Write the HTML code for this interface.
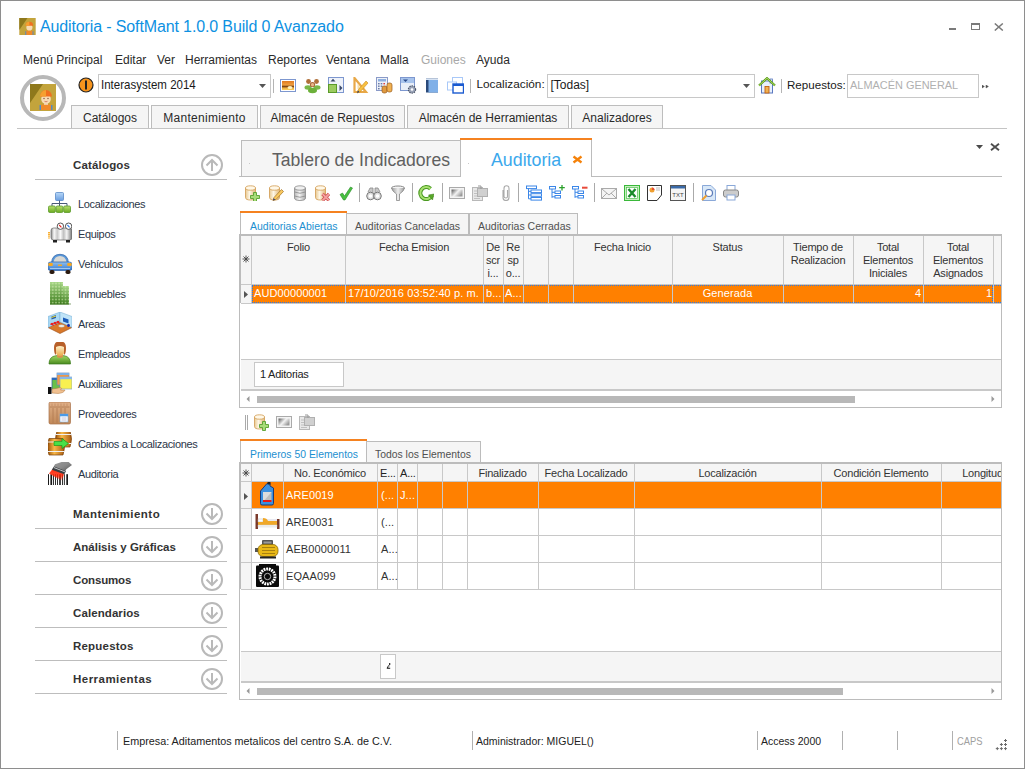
<!DOCTYPE html><html><head><meta charset="utf-8"><style>
*{box-sizing:border-box;margin:0;padding:0}
html,body{width:1025px;height:769px;overflow:hidden;background:#fff}
body{position:relative;font-family:"Liberation Sans",sans-serif;color:#222}
.a{position:absolute}
.t{position:absolute;white-space:nowrap;line-height:1}
.frame{left:0;top:0;width:1025px;height:769px;border:1px solid #8e8e8e}
.menu .t{font-size:12px;color:#2a2a2a}
.rt{position:absolute;top:105px;height:24px;background:#f5f5f5;border:1px solid #bdbdbd;border-bottom:none}
.rt span{position:absolute;top:6px;left:0;width:100%;text-align:center;font-size:12px;color:#2a2a2a;white-space:nowrap;line-height:12px}
.it{position:absolute;left:78px;font-size:11px;color:#2b3648;letter-spacing:-0.35px;white-space:nowrap;line-height:1}
.hd{position:absolute;left:73px;font-size:11.5px;font-weight:bold;color:#333;white-space:nowrap;line-height:1}
.ln{position:absolute;left:35px;width:192px;height:1px;background:#bdbdbd}
.circ{position:absolute;width:22px;height:22px;border-radius:50%;border:2px solid #c6c6c6}
.sep{position:absolute;width:1px;background:#b4b4b4}
.g{position:absolute;font-size:10.5px;color:#222;white-space:nowrap;line-height:1;letter-spacing:-0.2px}
.hl{position:absolute;height:1px;background:#c8c8c8}
.vl{position:absolute;width:1px;background:#c8c8c8}
svg{position:absolute}
</style></head><body>
<div class="a frame"></div>
<svg style="left:19px;top:18px" width="17" height="17" viewBox="0 0 26 27"><rect width="26" height="27" fill="#c3a43c"/><path d="M0 0 H13 L0 19Z" fill="#8e781c"/><path d="M9.5 27 V21.5 Q16 18.5 22.5 21.5 V27Z" fill="#f08a2a"/><rect x="9.5" y="21" width="1.5" height="6" fill="#4a90c8"/><rect x="21" y="21" width="1.5" height="6" fill="#4a90c8"/><ellipse cx="16" cy="15" rx="4.8" ry="5" fill="#f8dcb4"/><path d="M10 12.5 A6 6.5 0 0 1 22 12.5Z" fill="#f07020"/><path d="M10 12.5 A6 6.5 0 0 1 16 6 V12.5Z" fill="#f5a030"/></svg>
<div class="t" style="left:40px;top:18.5px;font-size:16px;color:#0d91e2;letter-spacing:-0.13px">Auditoria - SoftMant 1.0.0 Build 0 Avanzado</div>
<div class="a" style="left:949px;top:28px;width:7px;height:2px;background:#7a7a7a"></div>
<div class="a" style="left:971px;top:23px;width:9px;height:7px;border:1px solid #7a7a7a;border-top-width:2px"></div>
<svg style="left:994px;top:23px" width="10" height="8" viewBox="0 0 10 8"><path d="M0.8 0.5 L8.8 7.5 M8.8 0.5 L0.8 7.5" stroke="#7a7a7a" stroke-width="1.5"/></svg>
<div class="menu">
<div class="t" style="left:23px;top:54px;">Menú Principal</div>
<div class="t" style="left:115px;top:54px;">Editar</div>
<div class="t" style="left:157px;top:54px;">Ver</div>
<div class="t" style="left:185px;top:54px;">Herramientas</div>
<div class="t" style="left:268px;top:54px;">Reportes</div>
<div class="t" style="left:326px;top:54px;">Ventana</div>
<div class="t" style="left:380px;top:54px;">Malla</div>
<div class="t" style="left:421px;top:54px;color:#a8a8a8">Guiones</div>
<div class="t" style="left:476px;top:54px;">Ayuda</div>
</div>
<div class="a" style="left:20px;top:75px;width:46px;height:46px;border-radius:50%;border:4px solid #b8b8b8;background:#fff"></div>
<svg style="left:30px;top:84px" width="26" height="27" viewBox="0 0 26 27"><rect width="26" height="27" fill="#c3a43c"/><path d="M0 0 H13 L0 19Z" fill="#8e781c"/><path d="M9.5 26 V21.5 Q16 18.5 22.5 21.5 V26Z" fill="#f08a2a"/><rect x="9.5" y="21" width="1.5" height="5" fill="#4a90c8"/><rect x="21" y="21" width="1.5" height="5" fill="#4a90c8"/><rect x="14" y="17" width="4" height="4" fill="#f0c8a0"/><ellipse cx="16" cy="15" rx="4.8" ry="5" fill="#f8dcb4"/><path d="M10 12.5 A6 6.5 0 0 1 22 12.5Z" fill="#f07020"/><path d="M10 12.5 A6 6.5 0 0 1 16 6 V12.5Z" fill="#f5a030"/><circle cx="14" cy="14.5" r="0.7" fill="#7a4a3a"/><circle cx="18" cy="14.5" r="0.7" fill="#7a4a3a"/><path d="M14.5 17.3 Q16 18.3 17.5 17.3" stroke="#c86a5a" stroke-width="0.8" fill="none"/></svg>
<svg style="left:78px;top:77px" width="16" height="16" viewBox="0 0 16 16"><circle cx="8" cy="8" r="7" fill="#f7941d" stroke="#222" stroke-width="1.2"/><rect x="7" y="3.5" width="2" height="9" fill="#222"/></svg>
<div class="a" style="left:98px;top:74px;width:173px;height:24px;border:1px solid #c8c8c8;background:#fff"></div>
<div class="t" style="left:101px;top:79px;font-size:12.2px;color:#1a1a1a;transform:scaleX(0.945);transform-origin:0 0">Interasystem 2014</div>
<svg style="left:259px;top:84px" width="8" height="5" viewBox="0 0 8 5"><path d="M0 0H7L3.5 4Z" fill="#555"/></svg>
<div class="sep" style="left:273px;top:79px;height:14px"></div>
<svg style="left:280px;top:77px" width="17" height="17" viewBox="0 0 17 17"><defs><linearGradient id="sun" x1="0" y1="0" x2="0" y2="1"><stop offset="0" stop-color="#e07a20"/><stop offset="0.45" stop-color="#f0a040"/><stop offset="0.6" stop-color="#7a4010"/><stop offset="0.8" stop-color="#f0b040"/><stop offset="1" stop-color="#f8d060"/></linearGradient></defs><rect x="0.5" y="2.5" width="15" height="12" fill="#fff" stroke="#7d97cf"/><rect x="2" y="4" width="12" height="9" fill="url(#sun)"/><ellipse cx="10" cy="10.5" rx="2.5" ry="1.5" fill="#fff4c0"/></svg>
<svg style="left:304px;top:77px" width="17" height="17" viewBox="0 0 17 17"><circle cx="4.5" cy="4.5" r="2.4" fill="#b0703a"/><circle cx="12.5" cy="4.5" r="2.4" fill="#b0703a"/><ellipse cx="4" cy="10.5" rx="3.5" ry="2.2" fill="#7ab848"/><ellipse cx="13" cy="10.5" rx="3.5" ry="2.2" fill="#7ab848"/><circle cx="8.5" cy="7.5" r="2.6" fill="#a8643a"/><ellipse cx="8.5" cy="7.8" rx="1.6" ry="1.8" fill="#e8b888"/><ellipse cx="8.5" cy="13.5" rx="4.5" ry="2.8" fill="#6cb03a"/></svg>
<svg style="left:328px;top:77px" width="17" height="17" viewBox="0 0 17 17"><rect x="0.5" y="0.5" width="15" height="15" fill="#eef2fa" stroke="#7d97cf"/><rect x="0.5" y="7.5" width="8" height="8" fill="#9ccc60" stroke="#5a9a2a"/><path d="M2.5 4.5 L5 1.8 L7.5 4.5Z" fill="#3a4a6a"/><path d="M11.5 8 L14.5 11 L11.5 14Z" fill="#3a4a6a"/></svg>
<svg style="left:353px;top:77px" width="17" height="17" viewBox="0 0 17 17"><path d="M1.5 1 L1.5 15 L13 15Z" fill="none" stroke="#e8a848" stroke-width="2.2"/><path d="M4.5 6.5 L4.5 12 L8.5 12Z" fill="#f8e0a8"/><path d="M15 6 L13 4 L5 13 L4 16 L7 15Z" fill="#f8c040" stroke="#c88a20" stroke-width="0.6"/><path d="M4 16 L5 13.5 L6.5 15Z" fill="#2a3a6a"/></svg>
<svg style="left:376px;top:77px" width="17" height="17" viewBox="0 0 17 17"><rect x="0.5" y="0.5" width="11" height="13" fill="#eef2f8" stroke="#8a9ac8"/><rect x="2" y="2" width="8" height="2.5" fill="#8fb0e0"/><g fill="#6a7aa8"><rect x="2" y="6" width="1.6" height="1.4"/><rect x="4.7" y="6" width="1.6" height="1.4"/><rect x="7.4" y="6" width="1.6" height="1.4" fill="#e04040"/><rect x="2" y="8.5" width="1.6" height="1.4"/><rect x="4.7" y="8.5" width="1.6" height="1.4"/><rect x="2" y="11" width="1.6" height="1.4"/></g><rect x="6" y="9" width="5" height="7" rx="2" fill="#e09a40" stroke="#9a5a1a" stroke-width="0.7"/><rect x="11" y="6" width="5" height="9" rx="2" fill="#f0b050" stroke="#9a5a1a" stroke-width="0.7"/></svg>
<svg style="left:400px;top:77px" width="17" height="17" viewBox="0 0 17 17"><rect x="0.5" y="0.5" width="14" height="13" fill="#e8eef8" stroke="#7d97cf"/><rect x="1" y="1" width="13" height="5" fill="#a8c4ec"/><path d="M3 2.5 H8 L5.5 5Z" fill="#2a4a8a"/><circle cx="12" cy="12.5" r="3.6" fill="#9aa4b8" stroke="#4a5468" stroke-width="1.2" stroke-dasharray="1.4 0.9"/><circle cx="12" cy="12.5" r="1.3" fill="#fff"/></svg>
<svg style="left:425px;top:77px" width="17" height="17" viewBox="0 0 17 17"><rect x="1" y="1.5" width="12" height="14" fill="#2a4a7a"/><rect x="3.5" y="2.5" width="9.5" height="13" fill="#80b0e8"/><rect x="1" y="1.5" width="12" height="1.5" fill="#d8e4f4"/></svg>
<svg style="left:447px;top:77px" width="17" height="17" viewBox="0 0 17 17"><rect x="5.5" y="0.5" width="10" height="8" fill="#fff" stroke="#a8c8f8"/><rect x="0.5" y="5" width="9" height="8" fill="#fff" stroke="#a8c8f8"/><rect x="6" y="7" width="10.5" height="9" fill="#fff" stroke="#1a5ad0" stroke-width="1.4"/><rect x="6" y="7" width="10.5" height="2" fill="#1a5ad0"/></svg>
<div class="sep" style="left:470px;top:79px;height:14px"></div>
<div class="t" style="left:476.5px;top:79px;font-size:11.8px;color:#1a1a1a">Localización:</div>
<div class="a" style="left:547px;top:74px;width:208px;height:24px;border:1px solid #c8c8c8;background:#fff"></div>
<div class="t" style="left:550.5px;top:79px;font-size:12px;color:#1a1a1a">[Todas]</div>
<svg style="left:743px;top:84px" width="8" height="5" viewBox="0 0 8 5"><path d="M0 0H7L3.5 4Z" fill="#555"/></svg>
<svg style="left:758px;top:77px" width="18" height="17" viewBox="0 0 18 17"><rect x="3.5" y="4" width="11" height="12" fill="#e8f0fc" stroke="#5a78c0" stroke-width="1"/><rect x="12" y="2" width="2.5" height="4" fill="#e8f0fc" stroke="#5a78c0" stroke-width="0.8"/><path d="M1 8.5 L9 1.2 L17 8.5" fill="none" stroke="#5a9a18" stroke-width="2.2"/><path d="M1 8.5 L9 1.2 L17 8.5" fill="none" stroke="#a8d860" stroke-width="1"/><rect x="7" y="9.5" width="4" height="6.5" fill="#f0b050" stroke="#c06010" stroke-width="0.9"/></svg>
<div class="sep" style="left:781px;top:79px;height:14px"></div>
<div class="t" style="left:787px;top:79px;font-size:11.6px;color:#1a1a1a">Repuestos:</div>
<div class="a" style="left:847px;top:74px;width:132px;height:24px;border:1px solid #c8c8c8;background:#fff"></div>
<div class="t" style="left:850px;top:79.5px;font-size:10.95px;color:#b0b0b0">ALMACÉN GENERAL</div>
<svg style="left:982px;top:85px" width="8" height="4" viewBox="0 0 8 4"><path d="M0 0 L2.4 1.5 L0 3Z M4 0 L6.4 1.5 L4 3Z" fill="#505050" stroke="#505050" stroke-width="0.5"/></svg>
<div class="rt" style="left:71px;width:78px"><span>Catálogos</span></div>
<div class="rt" style="left:151px;width:107px"><span><span style='letter-spacing:0.3px;position:static'>Mantenimiento</span></span></div>
<div class="rt" style="left:260px;width:145px"><span>Almacén de Repuestos</span></div>
<div class="rt" style="left:407px;width:162px"><span>Almacén de Herramientas</span></div>
<div class="rt" style="left:571px;width:92px"><span>Analizadores</span></div>
<div class="a" style="left:17px;top:128px;width:990px;height:1px;background:#c4c4c4"></div>
<div class="hd" style="top:160px;letter-spacing:0.17px">Catálogos</div>
<svg style="left:201px;top:154px" width="23" height="23" viewBox="0 0 23 23"><circle cx="11" cy="11" r="10" fill="none" stroke="#b9b9b9" stroke-width="2"/><path d="M11 17 V5.5 M5.5 11.5 L11 6 L16.5 11.5" fill="none" stroke="#b9b9b9" stroke-width="2"/></svg>
<div class="ln" style="top:179px"></div>
<svg style="left:48px;top:192px" width="24" height="24" viewBox="0 0 24 24"><defs><linearGradient id="nb" x1="0" y1="0" x2="0" y2="1"><stop offset="0" stop-color="#b8d8f8"/><stop offset="1" stop-color="#6a9ee0"/></linearGradient><linearGradient id="ng" x1="0" y1="0" x2="0" y2="1"><stop offset="0" stop-color="#b8e070"/><stop offset="1" stop-color="#6aaa20"/></linearGradient></defs><rect x="7.5" y="0.5" width="8" height="8" rx="1" fill="url(#nb)" stroke="#5a8ac8" stroke-width="0.8"/><path d="M11.5 8.5 V11.5 M4 11.5 H19 M4 11.5 V14 M11.5 11.5 V14 M19 11.5 V14" stroke="#4a5a78" stroke-width="1"/><rect x="0.5" y="14" width="6.8" height="6.5" rx="1.2" fill="url(#ng)" stroke="#5a9a2a" stroke-width="0.8"/><rect x="8.1" y="14" width="6.8" height="6.5" rx="1.2" fill="url(#ng)" stroke="#5a9a2a" stroke-width="0.8"/><rect x="15.7" y="14" width="6.8" height="6.5" rx="1.2" fill="url(#ng)" stroke="#5a9a2a" stroke-width="0.8"/></svg>
<div class="it" style="top:199px">Localizaciones</div>
<svg style="left:48px;top:222px" width="24" height="24" viewBox="0 0 24 24"><defs><linearGradient id="tk" x1="0" y1="0" x2="1" y2="0"><stop offset="0" stop-color="#8a8a8a"/><stop offset="0.15" stop-color="#f8f8f8"/><stop offset="0.3" stop-color="#c8c8c8"/><stop offset="0.45" stop-color="#fafafa"/><stop offset="0.6" stop-color="#c0c0c0"/><stop offset="0.75" stop-color="#f4f4f4"/><stop offset="1" stop-color="#777"/></linearGradient></defs><rect x="3" y="6" width="21" height="12" rx="2.5" fill="url(#tk)" stroke="#666" stroke-width="0.7"/><rect x="5" y="18" width="4" height="2.5" fill="#222"/><rect x="18" y="18" width="4" height="2.5" fill="#222"/><circle cx="12.4" cy="4.2" r="3.2" fill="#fff" stroke="#444" stroke-width="0.9"/><circle cx="20.6" cy="4.2" r="3.2" fill="#fff" stroke="#444" stroke-width="0.9"/><path d="M11.2 3 L13.4 5.3" stroke="#e82020" stroke-width="1.1"/><path d="M19.4 3 L21.6 5.3" stroke="#2a7ae8" stroke-width="1.1"/><path d="M1 10 V17" stroke="#f8a820" stroke-width="1.8" stroke-dasharray="1.2 0.6"/></svg>
<div class="it" style="top:229px">Equipos</div>
<svg style="left:48px;top:252px" width="24" height="24" viewBox="0 0 24 24"><defs><linearGradient id="cb" x1="0" y1="0" x2="0" y2="1"><stop offset="0" stop-color="#8ec0f0"/><stop offset="1" stop-color="#3a78c8"/></linearGradient></defs><path d="M3.5 11 Q4 2.3 12 2.3 Q20 2.3 20.5 11Z" fill="#5a98d8" stroke="#2a60a8" stroke-width="0.7"/><path d="M5.5 10 Q6.5 4 12 4 Q17.5 4 18.5 10Z" fill="#d8d8d4"/><rect x="0" y="10" width="24" height="8.5" rx="2.5" fill="url(#cb)" stroke="#2a60a8" stroke-width="0.7"/><rect x="0.3" y="11" width="4.5" height="3" rx="1" fill="#f8a820"/><rect x="19.2" y="11" width="4.5" height="3" rx="1" fill="#f8a820"/><rect x="10" y="12.5" width="4" height="1.5" fill="#f8a820"/><path d="M2 16.5 H22" stroke="#b8d8f8" stroke-width="0.8"/><rect x="1.5" y="18" width="5" height="4" rx="1.8" fill="#2a1a10"/><rect x="17.5" y="18" width="5" height="4" rx="1.8" fill="#2a1a10"/></svg>
<div class="it" style="top:259px">Vehículos</div>
<svg style="left:48px;top:282px" width="24" height="24" viewBox="0 0 24 24"><defs><linearGradient id="bg1" x1="0" y1="0" x2="0" y2="1"><stop offset="0" stop-color="#a8d888"/><stop offset="1" stop-color="#3a7a1a"/></linearGradient><pattern id="bw" width="3.2" height="3.2" patternUnits="userSpaceOnUse"><rect x="0.6" y="0.6" width="1.8" height="1.8" fill="#d8f0b8" opacity="0.55"/></pattern></defs><rect x="2" y="-1" width="13" height="23.5" fill="url(#bg1)"/><rect x="2" y="-1" width="13" height="23.5" fill="url(#bw)"/><rect x="15" y="4" width="6" height="18.5" fill="url(#bg1)"/><rect x="15" y="4" width="6" height="18.5" fill="url(#bw)"/><rect x="2" y="21.5" width="21" height="1" fill="#3a6a1a" opacity="0.6"/></svg>
<div class="it" style="top:289px">Inmuebles</div>
<svg style="left:48px;top:312px" width="24" height="24" viewBox="0 0 24 24"><path d="M0 15.5 L12 10 L24 15.5 L12 21.5Z" fill="#d8782a" stroke="#9a4a10" stroke-width="0.6"/><path d="M0 15.5 V4.5 L12 0 V10Z" fill="#a8d8f4" stroke="#70a8d0" stroke-width="0.5"/><path d="M12 0 L24 4.5 V15.5 L12 10Z" fill="#c0e4f8" stroke="#70a8d0" stroke-width="0.5"/><path d="M3.5 4.5 L8 3 V6 L3.5 7.5Z" fill="#2a5aa8"/><path d="M3.5 5 L8 3.6 V4.6 L3.5 6Z" fill="#f0e030"/><path d="M15 5.5 L20.5 7.5 V11.5 L15 9.5Z" fill="#1a5ab8"/><path d="M2 12.5 Q3 10 5 11 L6 14 Z M5 11.5 Q6 9 8 10 L9 13Z M8 10.5 Q9 8 11 9 L12 12Z" fill="#e82020"/><ellipse cx="13.5" cy="14" rx="3" ry="1.3" fill="#f0f0e8" stroke="#aaa" stroke-width="0.4"/><circle cx="20.5" cy="13.5" r="1.4" fill="#1a2aa8"/></svg>
<div class="it" style="top:319px">Areas</div>
<svg style="left:48px;top:342px" width="24" height="24" viewBox="0 0 24 24"><defs><linearGradient id="es" x1="0" y1="0" x2="0" y2="1"><stop offset="0" stop-color="#a0d860"/><stop offset="1" stop-color="#4a8a20"/></linearGradient><linearGradient id="ef" x1="0" y1="0" x2="0" y2="1"><stop offset="0" stop-color="#fff0c8"/><stop offset="1" stop-color="#e8a848"/></linearGradient></defs><path d="M1 22 Q1 14.5 8 13.7 L16 13.7 Q22.5 14.5 22.5 22Z" fill="url(#es)" stroke="#3a7a1a" stroke-width="0.7"/><path d="M9 12 H15 V15 Q12 17 9 15Z" fill="#d89050"/><path d="M6 6 Q6 -1 12 -0.5 Q18 -1 18 6 Q18 11 16.5 13 L15 9 H9 L7.5 13 Q6 11 6 6Z" fill="#b8602a"/><path d="M8 5 Q12 3 16 5 V10 Q16 14 12 14 Q8 14 8 10Z" fill="url(#ef)"/></svg>
<div class="it" style="top:349px">Empleados</div>
<svg style="left:48px;top:372px" width="24" height="24" viewBox="0 0 24 24"><rect x="4" y="6" width="8" height="12" fill="#6ac048" stroke="#2a5aa8" stroke-width="0.7"/><rect x="4" y="6" width="8" height="2" fill="#2a6ab8"/><rect x="9" y="1" width="12" height="12" fill="#f09848" stroke="#6a8ab8" stroke-width="0.7"/><rect x="9" y="1" width="12" height="2" fill="#7ab0e8"/><rect x="12" y="5" width="12" height="12" fill="#f8f050" stroke="#8aa8c8" stroke-width="0.7"/><rect x="12" y="5" width="12" height="2.2" fill="#88b8e8"/><path d="M4 17 Q9 16.5 12 15.5 Q15 16 12.5 18 L17 18 Q16 21 10 21.5 L4 21Z" fill="#f0c090" stroke="#b07840" stroke-width="0.5"/><rect x="0" y="15" width="3.5" height="7" fill="#111"/></svg>
<div class="it" style="top:379px">Auxiliares</div>
<svg style="left:48px;top:402px" width="24" height="24" viewBox="0 0 24 24"><defs><linearGradient id="cr" x1="0" y1="0" x2="0" y2="1"><stop offset="0" stop-color="#e0b088"/><stop offset="1" stop-color="#c08858"/></linearGradient></defs><rect x="1" y="0" width="21.5" height="22" rx="1.5" fill="url(#cr)" stroke="#a87048" stroke-width="0.7"/><path d="M2 5 H21.5" stroke="#a87048" stroke-width="0.7"/><path d="M4 1.5 V4 M7 1.5 V4 M10 1.5 V4 M13 1.5 V4 M16 1.5 V4 M19 1.5 V4" stroke="#b88058" stroke-width="0.6"/><path d="M5 6 V21 M9 6 V21 M13 6 V21 M17 6 V21" stroke="#b07850" stroke-width="0.8"/><rect x="12" y="12" width="8" height="8" fill="#fff" stroke="#7aa8d8" stroke-width="0.6"/><rect x="12" y="12" width="8" height="2.3" fill="#4a9ae8"/><path d="M13.5 16 H18.5 M13.5 18 H18.5" stroke="#aac" stroke-width="0.7"/></svg>
<div class="it" style="top:409px">Proveedores</div>
<svg style="left:48px;top:432px" width="24" height="24" viewBox="0 0 24 24"><defs><linearGradient id="br" x1="0" y1="0" x2="1" y2="0"><stop offset="0" stop-color="#9a5008"/><stop offset="0.4" stop-color="#f8b848"/><stop offset="1" stop-color="#a85a10"/></linearGradient></defs><path d="M9 -1 H22 Q25 7 22 15 H9 Q6 7 9 -1Z" fill="url(#br)" stroke="#7a4008" stroke-width="0.7"/><path d="M7.5 2.5 H23.5 M7.5 11.5 H23.5" stroke="#f0f0f0" stroke-width="1.2"/><path d="M1 6.5 H15 Q18 15 15 23 H1 Q-2 15 1 6.5Z" fill="url(#br)" stroke="#7a4008" stroke-width="0.7"/><path d="M-0.5 10 H16.5 M-0.5 19.5 H16.5" stroke="#f0f0f0" stroke-width="1.2"/><path d="M6 9.5 H14 V6.5 L20.5 11.5 L14 16.5 V13.5 H6Z" fill="#48e048" stroke="#1a9a1a" stroke-width="0.7"/></svg>
<div class="it" style="top:439px">Cambios a Localizaciones</div>
<svg style="left:48px;top:462px" width="24" height="24" viewBox="0 0 24 24"><defs><linearGradient id="sc" x1="0" y1="0" x2="1" y2="1"><stop offset="0" stop-color="#9a9a9a"/><stop offset="0.5" stop-color="#8a8a8a"/><stop offset="1" stop-color="#505050"/></linearGradient><linearGradient id="lz" x1="0" y1="0" x2="0" y2="1"><stop offset="0" stop-color="#ff3010"/><stop offset="0.6" stop-color="#ff2000" stop-opacity="0.8"/><stop offset="1" stop-color="#ff2000" stop-opacity="0"/></linearGradient></defs><g fill="#1a1a1a"><rect x="0" y="12.2" width="1" height="10.8"/><rect x="2.4" y="12.2" width="1.7" height="10.8"/><rect x="5" y="12.2" width="0.9" height="10.8"/><rect x="7" y="12.2" width="0.9" height="10.8"/><rect x="9.1" y="12.2" width="0.9" height="10.8"/><rect x="11.2" y="12.2" width="1.6" height="10.8"/><rect x="14" y="12.2" width="0.9" height="10.8"/><rect x="15.9" y="12.2" width="0.9" height="10.8"/><rect x="18.3" y="12.2" width="1.7" height="10.8"/></g><path d="M1 11.5 L4.5 7 L16 11.5 L14 19Z" fill="url(#lz)"/><path d="M7 2.3 L14.4 -0.3 L19.9 -0.7 L24 3 L18.3 7.3 L16.4 10.8 L4.25 7.3Z" fill="url(#sc)"/><path d="M3.8 7.8 L6.3 4.6 L18 9.2 L16.3 12.3Z" fill="#3a3e42"/><path d="M6 5.6 L17.3 10" stroke="#e8e8e8" stroke-width="0.8"/></svg>
<div class="it" style="top:469px">Auditoria</div>
<div class="hd" style="top:509px;letter-spacing:0.46px">Mantenimiento</div>
<svg style="left:201px;top:503px" width="23" height="23" viewBox="0 0 23 23"><circle cx="11" cy="11" r="10" fill="none" stroke="#b9b9b9" stroke-width="2"/><path d="M11 5 V16.5 M5.5 10.5 L11 16 L16.5 10.5" fill="none" stroke="#b9b9b9" stroke-width="2"/></svg>
<div class="ln" style="top:528px"></div>
<div class="hd" style="top:542px;letter-spacing:0px">Análisis y Gráficas</div>
<svg style="left:201px;top:536px" width="23" height="23" viewBox="0 0 23 23"><circle cx="11" cy="11" r="10" fill="none" stroke="#b9b9b9" stroke-width="2"/><path d="M11 5 V16.5 M5.5 10.5 L11 16 L16.5 10.5" fill="none" stroke="#b9b9b9" stroke-width="2"/></svg>
<div class="ln" style="top:561px"></div>
<div class="hd" style="top:575px;letter-spacing:-0.15px">Consumos</div>
<svg style="left:201px;top:569px" width="23" height="23" viewBox="0 0 23 23"><circle cx="11" cy="11" r="10" fill="none" stroke="#b9b9b9" stroke-width="2"/><path d="M11 5 V16.5 M5.5 10.5 L11 16 L16.5 10.5" fill="none" stroke="#b9b9b9" stroke-width="2"/></svg>
<div class="ln" style="top:594px"></div>
<div class="hd" style="top:608px;letter-spacing:0.09px">Calendarios</div>
<svg style="left:201px;top:602px" width="23" height="23" viewBox="0 0 23 23"><circle cx="11" cy="11" r="10" fill="none" stroke="#b9b9b9" stroke-width="2"/><path d="M11 5 V16.5 M5.5 10.5 L11 16 L16.5 10.5" fill="none" stroke="#b9b9b9" stroke-width="2"/></svg>
<div class="ln" style="top:627px"></div>
<div class="hd" style="top:641px;letter-spacing:0.2px">Repuestos</div>
<svg style="left:201px;top:635px" width="23" height="23" viewBox="0 0 23 23"><circle cx="11" cy="11" r="10" fill="none" stroke="#b9b9b9" stroke-width="2"/><path d="M11 5 V16.5 M5.5 10.5 L11 16 L16.5 10.5" fill="none" stroke="#b9b9b9" stroke-width="2"/></svg>
<div class="ln" style="top:660px"></div>
<div class="hd" style="top:674px;letter-spacing:0.47px">Herramientas</div>
<svg style="left:201px;top:668px" width="23" height="23" viewBox="0 0 23 23"><circle cx="11" cy="11" r="10" fill="none" stroke="#b9b9b9" stroke-width="2"/><path d="M11 5 V16.5 M5.5 10.5 L11 16 L16.5 10.5" fill="none" stroke="#b9b9b9" stroke-width="2"/></svg>
<div class="ln" style="top:693px"></div>
<svg style="left:976px;top:145px" width="8" height="5" viewBox="0 0 8 5"><path d="M0 0H7L3.5 4Z" fill="#4a4a4a"/></svg>
<svg style="left:990px;top:142.5px" width="10" height="8" viewBox="0 0 10 8"><path d="M1 0.8 L9 7.2 M9 0.8 L1 7.2" stroke="#4e4e4e" stroke-width="1.9"/></svg>
<div class="a" style="left:241px;top:140px;width:220px;height:37px;background:#f5f5f5;border:1px solid #bcbcbc"></div>
<div class="a" style="left:249px;top:163px;width:1px;height:1px;background:#c8c8c8"></div>
<div class="t" style="left:272px;top:152px;font-size:17.6px;color:#606060">Tablero de Indicadores</div>
<div class="a" style="left:461px;top:140px;width:131px;height:37px;background:#fff;border-right:1px solid #bcbcbc"></div>
<div class="a" style="left:460px;top:138px;width:132px;height:2px;background:#f58220"></div>
<div class="a" style="left:468px;top:163px;width:1px;height:1px;background:#c8c8c8"></div>
<div class="t" style="left:491px;top:152px;font-size:17.8px;color:#3aa8ec">Auditoria</div>
<svg style="left:572px;top:154.5px" width="11" height="9" viewBox="0 0 11 9"><path d="M1.5 1.5 L9.5 7.5 M9.5 1.5 L1.5 7.5" stroke="#f5820a" stroke-width="2.3"/></svg>
<div class="hl" style="left:239px;top:176px;width:3px;background:#bcbcbc"></div>
<div class="hl" style="left:592px;top:176px;width:410px;background:#bcbcbc"></div>
<svg style="left:244px;top:185px" width="16" height="16" viewBox="0 0 16 16"><defs><linearGradient id="cg1" x1="0" y1="0" x2="1" y2="0"><stop offset="0" stop-color="#e8c890"/><stop offset="0.4" stop-color="#fdf6e6"/><stop offset="1" stop-color="#e0b878"/></linearGradient></defs><path d="M1.5 3 V12.5 Q1.5 15 6.5 15 Q11.5 15 11.5 12.5 V3" fill="url(#cg1)" stroke="#d09a50" stroke-width="0.8"/><ellipse cx="6.5" cy="3" rx="5" ry="2.2" fill="#fff8e8" stroke="#d09a50" stroke-width="0.8"/><path d="M9.5 7.5 H12.5 V10.5 H15.5 V13.5 H12.5 V16.5 H9.5 V13.5 H6.5 V10.5 H9.5Z" fill="#a8dc78" stroke="#58a030" stroke-width="0.9"/></svg>
<svg style="left:268px;top:185px" width="16" height="16" viewBox="0 0 16 16"><defs><linearGradient id="cg2" x1="0" y1="0" x2="1" y2="0"><stop offset="0" stop-color="#e8c890"/><stop offset="0.4" stop-color="#fdf6e6"/><stop offset="1" stop-color="#e0b878"/></linearGradient></defs><path d="M1.5 3 V12.5 Q1.5 15 6.5 15 Q11.5 15 11.5 12.5 V3" fill="url(#cg2)" stroke="#d09a50" stroke-width="0.8"/><ellipse cx="6.5" cy="3" rx="5" ry="2.2" fill="#fff8e8" stroke="#d09a50" stroke-width="0.8"/><path d="M15.5 6.5 L13.5 4.5 L6 12.5 L5 15.5 L8 14.5Z" fill="#f8c860" stroke="#a07020" stroke-width="0.7"/><path d="M5 15.5 L5.6 13.3 L7.3 14.8Z" fill="#2a3a7a"/></svg>
<svg style="left:292px;top:185px" width="16" height="16" viewBox="0 0 16 16"><defs><linearGradient id="cg3" x1="0" y1="0" x2="1" y2="0"><stop offset="0" stop-color="#b8b8b8"/><stop offset="0.45" stop-color="#f4f4f4"/><stop offset="1" stop-color="#a8a8a8"/></linearGradient></defs><path d="M2.5 3 V13 Q2.5 15.5 8 15.5 Q13.5 15.5 13.5 13 V3" fill="url(#cg3)" stroke="#8a8a8a" stroke-width="0.8"/><ellipse cx="8" cy="3" rx="5.5" ry="2.2" fill="#f0f0f0" stroke="#8a8a8a" stroke-width="0.8"/><path d="M2.5 7 Q8 9.5 13.5 7 M2.5 11 Q8 13.5 13.5 11" fill="none" stroke="#8a8a8a" stroke-width="0.8"/></svg>
<svg style="left:314px;top:185px" width="16" height="16" viewBox="0 0 16 16"><defs><linearGradient id="cg4" x1="0" y1="0" x2="1" y2="0"><stop offset="0" stop-color="#e8c890"/><stop offset="0.4" stop-color="#fdf6e6"/><stop offset="1" stop-color="#e0b878"/></linearGradient></defs><path d="M1.5 3 V12.5 Q1.5 15 6.5 15 Q11.5 15 11.5 12.5 V3" fill="url(#cg4)" stroke="#d09a50" stroke-width="0.8"/><ellipse cx="6.5" cy="3" rx="5" ry="2.2" fill="#fff8e8" stroke="#d09a50" stroke-width="0.8"/><path d="M8.5 9 L15 15.5 M15 9 L8.5 15.5" stroke="#c84848" stroke-width="3.2"/><path d="M8.5 9 L15 15.5 M15 9 L8.5 15.5" stroke="#f4a0a0" stroke-width="1.8"/></svg>
<svg style="left:338px;top:185px" width="16" height="16" viewBox="0 0 16 16"><path d="M2 9.5 L4.5 8 L6.5 11 L12.5 2 L14.5 3 L7 15 L5.5 15Z" fill="#48c040" stroke="#2a8a2a" stroke-width="0.6"/></svg>
<svg style="left:366px;top:185px" width="16" height="16" viewBox="0 0 16 16"><path d="M2 7 L4 3 H7 V8 M14 7 L12 3 H9 V8" fill="#c8c8c8" stroke="#888" stroke-width="0.8"/><circle cx="4.5" cy="11" r="3.8" fill="#ddd" stroke="#777" stroke-width="1"/><circle cx="11.5" cy="11" r="3.8" fill="#ddd" stroke="#777" stroke-width="1"/><circle cx="4.5" cy="11" r="1.8" fill="#fff"/><circle cx="11.5" cy="11" r="1.8" fill="#fff"/></svg>
<svg style="left:390px;top:185px" width="16" height="16" viewBox="0 0 16 16"><defs><linearGradient id="fg" x1="0" y1="0" x2="1" y2="0"><stop offset="0" stop-color="#999"/><stop offset="0.5" stop-color="#eee"/><stop offset="1" stop-color="#999"/></linearGradient></defs><ellipse cx="8" cy="3" rx="6.5" ry="2" fill="#f4f4f4" stroke="#888"/><path d="M1.5 3 Q2 6 6.5 9 V15.5 H9.5 V9 Q14 6 14.5 3" fill="url(#fg)" stroke="#888" stroke-width="0.8"/></svg>
<svg style="left:418px;top:185px" width="16" height="16" viewBox="0 0 16 16"><path d="M13.8 10.5 A6 6 0 1 1 12.5 3.8" fill="none" stroke="#4a9a20" stroke-width="4"/><path d="M13.8 10.5 A6 6 0 1 1 12.5 3.8" fill="none" stroke="#a8e070" stroke-width="2"/><path d="M10.5 10 L16 9 L14.5 15Z" fill="#58a828" stroke="#3a7a18" stroke-width="0.5"/></svg>
<svg style="left:449px;top:185px" width="16" height="16" viewBox="0 0 16 16"><defs><linearGradient id="wg1" x1="0" y1="0" x2="1" y2="0.6"><stop offset="0" stop-color="#555"/><stop offset="0.55" stop-color="#f4f4f4"/><stop offset="1" stop-color="#999"/></linearGradient></defs><rect x="0.5" y="2.5" width="15" height="11" fill="#f4f4f4" stroke="#aaa"/><rect x="2.5" y="4.5" width="11" height="7" fill="url(#wg1)"/></svg>
<svg style="left:472px;top:185px" width="16" height="16" viewBox="0 0 16 16"><rect x="0.5" y="2.5" width="10" height="13" fill="#e8e8e8" stroke="#b8b8b8"/><path d="M2 6 H8 M2 8.5 H8 M2 11 H8 M2 13.5 H8" stroke="#c0c0c0"/><rect x="5.5" y="3.5" width="10" height="8" fill="#d0d0d0" stroke="#b0b0b0"/><path d="M6 1 L9 1 L9 4" stroke="#999" fill="none"/></svg>
<svg style="left:498px;top:185px" width="16" height="16" viewBox="0 0 16 16"><path d="M5 5 V12.5 Q5 15.5 8 15.5 Q11 15.5 11 12.5 V3.5 Q11 0.8 8.5 0.8 Q6 0.8 6 3.5 V11.5 Q6 13 8 13 Q9.5 13 9.5 11.5 V5" fill="none" stroke="#aaa" stroke-width="1.1"/></svg>
<svg style="left:526px;top:185px" width="16" height="16" viewBox="0 0 16 16"><rect x="0.5" y="1" width="10" height="2.6" fill="#fff" stroke="#3a86e8" stroke-width="1"/><path d="M2.5 3.6 V13.8 M2.5 6.3 H5 M2.5 10 H5 M2.5 13.8 H5" stroke="#3a86e8" stroke-width="1"/><rect x="5" y="5" width="10.5" height="2.6" fill="#fff" stroke="#3a86e8" stroke-width="1"/><rect x="5" y="8.7" width="10.5" height="2.6" fill="#fff" stroke="#3a86e8" stroke-width="1"/><rect x="5" y="12.5" width="10.5" height="2.6" fill="#fff" stroke="#3a86e8" stroke-width="1"/></svg>
<svg style="left:549px;top:185px" width="16" height="16" viewBox="0 0 16 16"><rect x="0.5" y="1.5" width="6" height="2.5" fill="#fff" stroke="#3a86e8" stroke-width="1"/><path d="M3 4 V12.8 M3 7.3 H6 M3 11.8 H6" stroke="#3a86e8" stroke-width="1"/><rect x="6" y="6" width="5.5" height="2.5" fill="#fff" stroke="#3a86e8" stroke-width="1"/><rect x="6" y="10.5" width="5.5" height="2.5" fill="#fff" stroke="#3a86e8" stroke-width="1"/><path d="M13 0 V5.5 M10.2 2.7 H15.8" stroke="#2aa02a" stroke-width="1.3"/></svg>
<svg style="left:572px;top:185px" width="16" height="16" viewBox="0 0 16 16"><rect x="0.5" y="1.5" width="6" height="2.5" fill="#fff" stroke="#3a86e8" stroke-width="1"/><path d="M3 4 V12.8 M3 7.3 H6 M3 11.8 H6" stroke="#3a86e8" stroke-width="1"/><rect x="6" y="6" width="5.5" height="2.5" fill="#fff" stroke="#3a86e8" stroke-width="1"/><rect x="6" y="10.5" width="5.5" height="2.5" fill="#fff" stroke="#3a86e8" stroke-width="1"/><rect x="10" y="1.7" width="5.5" height="2" fill="#e84a3a"/></svg>
<svg style="left:601px;top:185px" width="16" height="16" viewBox="0 0 16 16"><rect x="0.5" y="3.5" width="15" height="10" fill="#f4f4f4" stroke="#aaa"/><path d="M1 4 L8 10 L15 4 M1 13 L6 8 M15 13 L10 8" fill="none" stroke="#aaa"/></svg>
<svg style="left:624px;top:185px" width="16" height="16" viewBox="0 0 16 16"><rect x="0.5" y="0.5" width="15" height="15" fill="#c8f0c0" stroke="#3ab83a"/><rect x="2.5" y="2.5" width="11" height="11" fill="#fff" stroke="#3ab83a" stroke-width="0.6"/><path d="M4.5 4 L11.5 12 M11.5 4 L4.5 12" stroke="#1a8a2a" stroke-width="2.4"/></svg>
<svg style="left:647px;top:185px" width="16" height="16" viewBox="0 0 16 16"><path d="M0.5 0.5 H14.5 V10 L10 15.5 H0.5Z" fill="#fff" stroke="#333"/><circle cx="5" cy="5" r="2.5" fill="#f0a030"/><path d="M5 5 V2.5 A2.5 2.5 0 0 1 7.5 5Z" fill="#e84a3a"/><path d="M9 3 H13 M9 5 H13" stroke="#bbb"/></svg>
<svg style="left:670px;top:185px" width="16" height="16" viewBox="0 0 16 16"><rect x="0.5" y="0.5" width="15" height="15" fill="#f4f4f4" stroke="#555"/><rect x="1" y="1" width="14" height="2.5" fill="#3a6aa8"/><text x="8" y="12" font-size="6" font-family="Liberation Sans" text-anchor="middle" fill="#444">TXT</text></svg>
<svg style="left:701px;top:185px" width="16" height="16" viewBox="0 0 16 16"><path d="M1.5 0.5 H10 L14.5 5 V15.5 H1.5Z" fill="#d8e8f8" stroke="#8aa8d8"/><circle cx="8" cy="8" r="3.5" fill="#fff" stroke="#5a7ab8" stroke-width="1.2"/><path d="M5.5 10.5 L1 15" stroke="#f0a030" stroke-width="2"/></svg>
<svg style="left:723px;top:185px" width="16" height="16" viewBox="0 0 16 16"><rect x="4" y="0.5" width="8" height="5" fill="#fff" stroke="#8aa8d8"/><rect x="0.5" y="5" width="15" height="7" rx="2" fill="#ccc" stroke="#888"/><rect x="4" y="10" width="8" height="5" fill="#fff" stroke="#8aa8d8"/></svg>
<div class="sep" style="left:359px;top:183px;height:19px;background:#aaa"></div>
<div class="sep" style="left:412px;top:183px;height:19px;background:#aaa"></div>
<div class="sep" style="left:442px;top:183px;height:19px;background:#aaa"></div>
<div class="sep" style="left:518px;top:183px;height:19px;background:#aaa"></div>
<div class="sep" style="left:594px;top:183px;height:19px;background:#aaa"></div>
<div class="sep" style="left:693px;top:183px;height:19px;background:#aaa"></div>
<div class="a" style="left:346px;top:213px;width:123px;height:22px;background:#f5f5f5;border:1px solid #bcbcbc;border-bottom:none"></div>
<div class="a" style="left:469px;top:213px;width:109px;height:22px;background:#f5f5f5;border:1px solid #bcbcbc;border-bottom:none"></div>
<div class="a" style="left:240px;top:211px;width:106px;height:24px;background:#fff;border-left:1px solid #bcbcbc"></div>
<div class="a" style="left:240px;top:211px;width:107px;height:2px;background:#f58220"></div>
<div class="t" style="left:250px;top:221px;font-size:10.5px;color:#1c8fd0">Auditorias Abiertas</div>
<div class="t" style="left:355px;top:221px;font-size:10.5px;color:#505050">Auditorias Canceladas</div>
<div class="t" style="left:478px;top:221px;font-size:10.5px;color:#505050">Auditorias Cerradas</div>
<div class="a" style="left:239px;top:234px;width:763px;height:174px;border:1px solid #bcbcbc;border-top:2px solid #bcbcbc;background:#fff"></div>
<div class="a" style="left:241px;top:236px;width:760px;height:48px;background:#f5f5f5"></div>
<div class="a" style="left:252px;top:285px;width:741px;height:18px;background:#ff8000"></div>
<div class="a" style="left:252px;top:285px;width:741px;height:18px;border:1px dotted #2a7ae8"></div>
<div class="hl" style="left:241px;top:284px;width:760px"></div>
<div class="hl" style="left:241px;top:303px;width:760px"></div>
<div class="vl" style="left:251px;top:236px;height:67px"></div>
<div class="vl" style="left:345px;top:236px;height:67px"></div>
<div class="vl" style="left:483px;top:236px;height:67px"></div>
<div class="vl" style="left:503px;top:236px;height:67px"></div>
<div class="vl" style="left:523px;top:236px;height:67px"></div>
<div class="vl" style="left:548px;top:236px;height:67px"></div>
<div class="vl" style="left:573px;top:236px;height:67px"></div>
<div class="vl" style="left:672px;top:236px;height:67px"></div>
<div class="vl" style="left:783px;top:236px;height:67px"></div>
<div class="vl" style="left:853px;top:236px;height:67px"></div>
<div class="vl" style="left:923px;top:236px;height:67px"></div>
<div class="vl" style="left:993px;top:236px;height:67px"></div>
<div class="vl" style="left:240px;top:236px;height:67px;background:#bcbcbc"></div>
<div class="a" style="left:241px;top:285px;width:10px;height:18px;background:#f5f5f5"></div>
<div class="a" style="left:994px;top:285px;width:7px;height:18px;background:#ff8000;border-top:1px dotted #2a7ae8;border-bottom:1px dotted #2a7ae8"></div>
<svg style="left:242px;top:255px" width="8" height="8" viewBox="0 0 8 8"><path d="M4 0.5 V7.5 M0.5 4 H7.5 M1.5 1.5 L6.5 6.5 M6.5 1.5 L1.5 6.5" stroke="#444" stroke-width="0.9"/></svg>
<svg style="left:244px;top:291px" width="5" height="7" viewBox="0 0 5 7"><path d="M0 0 L4 3.5 L0 7Z" fill="#555"/></svg>
<div class="t" style="left:252px;width:93px;top:242px;font-size:11px;color:#333;letter-spacing:-0.2px;text-align:center">Folio</div>
<div class="t" style="left:345px;width:138px;top:242px;font-size:11px;color:#333;letter-spacing:-0.2px;text-align:center">Fecha Emision</div>
<div class="t" style="left:483px;width:20px;top:242px;font-size:11px;color:#333;letter-spacing:-0.2px;text-align:center">De</div>
<div class="t" style="left:483px;width:20px;top:255px;font-size:11px;color:#333;letter-spacing:-0.2px;text-align:center">scr</div>
<div class="t" style="left:483px;width:20px;top:268px;font-size:11px;color:#333;letter-spacing:-0.2px;text-align:center">i...</div>
<div class="t" style="left:503px;width:20px;top:242px;font-size:11px;color:#333;letter-spacing:-0.2px;text-align:center">Re</div>
<div class="t" style="left:503px;width:20px;top:255px;font-size:11px;color:#333;letter-spacing:-0.2px;text-align:center">sp</div>
<div class="t" style="left:503px;width:20px;top:268px;font-size:11px;color:#333;letter-spacing:-0.2px;text-align:center">o...</div>
<div class="t" style="left:573px;width:99px;top:242px;font-size:11px;color:#333;letter-spacing:-0.2px;text-align:center">Fecha Inicio</div>
<div class="t" style="left:672px;width:111px;top:242px;font-size:11px;color:#333;letter-spacing:-0.2px;text-align:center">Status</div>
<div class="t" style="left:783px;width:70px;top:242px;font-size:11px;color:#333;letter-spacing:-0.2px;text-align:center">Tiempo de</div>
<div class="t" style="left:783px;width:70px;top:255px;font-size:11px;color:#333;letter-spacing:-0.2px;text-align:center">Realizacion</div>
<div class="t" style="left:853px;width:70px;top:242px;font-size:11px;color:#333;letter-spacing:-0.2px;text-align:center">Total</div>
<div class="t" style="left:853px;width:70px;top:255px;font-size:11px;color:#333;letter-spacing:-0.2px;text-align:center">Elementos</div>
<div class="t" style="left:853px;width:70px;top:268px;font-size:11px;color:#333;letter-spacing:-0.2px;text-align:center">Iniciales</div>
<div class="t" style="left:923px;width:70px;top:242px;font-size:11px;color:#333;letter-spacing:-0.2px;text-align:center">Total</div>
<div class="t" style="left:923px;width:70px;top:255px;font-size:11px;color:#333;letter-spacing:-0.2px;text-align:center">Elementos</div>
<div class="t" style="left:923px;width:70px;top:268px;font-size:11px;color:#333;letter-spacing:-0.2px;text-align:center">Asignados</div>
<div class="t" style="left:254px;top:288px;font-size:11px;color:#fff;letter-spacing:0.1px">AUD00000001</div>
<div class="t" style="left:348px;top:288px;font-size:11px;color:#fff;letter-spacing:0.1px">17/10/2016 03:52:40 p. m.</div>
<div class="t" style="left:486px;top:288px;font-size:11px;color:#fff;letter-spacing:0.1px">b...</div>
<div class="t" style="left:505px;top:288px;font-size:11px;color:#fff;letter-spacing:0.1px">A...</div>
<div class="t" style="left:672px;width:111px;top:288px;font-size:11px;color:#fff;letter-spacing:0.1px;text-align:center">Generada</div>
<div class="t" style="left:915px;top:288px;font-size:11px;color:#fff;letter-spacing:0.1px">4</div>
<div class="t" style="left:986px;top:288px;font-size:11px;color:#fff;letter-spacing:0.1px">1</div>
<div class="a" style="left:241px;top:359px;width:760px;height:32px;background:#f5f5f5;border-top:1px solid #c8c8c8;border-bottom:2px solid #c8c8c8"></div>
<div class="a" style="left:254px;top:362px;width:90px;height:25px;background:#fff;border:1px solid #c8c8c8"></div>
<div class="t" style="left:260px;top:369px;font-size:11px;color:#222;letter-spacing:-0.25px">1 Aditorias</div>
<svg style="left:246px;top:396px" width="4" height="7" viewBox="0 0 4 7"><path d="M3.5 0 L0.5 3 L3.5 6Z" fill="#999"/></svg>
<div class="a" style="left:257px;top:396px;width:598px;height:7px;background:#b8b8b8"></div>
<svg style="left:991px;top:396px" width="4" height="7" viewBox="0 0 4 7"><path d="M0.5 0 L3.5 3 L0.5 6Z" fill="#999"/></svg>
<div class="a" style="left:245px;top:415px;width:1px;height:15px;background:#aaa"></div>
<div class="a" style="left:247px;top:415px;width:1px;height:15px;background:#aaa"></div>
<svg style="left:253px;top:414px" width="17" height="17" viewBox="0 0 17 17"><defs><linearGradient id="cg5" x1="0" y1="0" x2="1" y2="0"><stop offset="0" stop-color="#e8c890"/><stop offset="0.4" stop-color="#fdf6e6"/><stop offset="1" stop-color="#e0b878"/></linearGradient></defs><path d="M1.5 3 V12.5 Q1.5 15 6.5 15 Q11.5 15 11.5 12.5 V3" fill="url(#cg5)" stroke="#d09a50" stroke-width="0.8"/><ellipse cx="6.5" cy="3" rx="5" ry="2.2" fill="#fff8e8" stroke="#d09a50" stroke-width="0.8"/><path d="M9.5 7.5 H12.5 V10.5 H15.5 V13.5 H12.5 V16.5 H9.5 V13.5 H6.5 V10.5 H9.5Z" fill="#a8dc78" stroke="#58a030" stroke-width="0.9"/></svg>
<svg style="left:276px;top:414px" width="16" height="16" viewBox="0 0 16 16"><defs><linearGradient id="wg2" x1="0" y1="0" x2="1" y2="0.6"><stop offset="0" stop-color="#555"/><stop offset="0.55" stop-color="#f4f4f4"/><stop offset="1" stop-color="#999"/></linearGradient></defs><rect x="0.5" y="2.5" width="15" height="11" fill="#f4f4f4" stroke="#aaa"/><rect x="2.5" y="4.5" width="11" height="7" fill="url(#wg2)"/></svg>
<svg style="left:299px;top:414px" width="16" height="16" viewBox="0 0 16 16"><rect x="0.5" y="2.5" width="10" height="13" fill="#e8e8e8" stroke="#b8b8b8"/><path d="M2 6 H8 M2 8.5 H8 M2 11 H8 M2 13.5 H8" stroke="#c0c0c0"/><rect x="5.5" y="3.5" width="10" height="8" fill="#d0d0d0" stroke="#b0b0b0"/><path d="M6 1 L9 1 L9 4" stroke="#999" fill="none"/></svg>
<div class="a" style="left:366px;top:441px;width:115px;height:22px;background:#f5f5f5;border:1px solid #bcbcbc;border-bottom:none"></div>
<div class="a" style="left:240px;top:439px;width:126px;height:24px;background:#fff;border-left:1px solid #bcbcbc"></div>
<div class="a" style="left:240px;top:439px;width:127px;height:2px;background:#f58220"></div>
<div class="t" style="left:250px;top:449.5px;font-size:10.4px;color:#1c8fd0">Primeros 50 Elementos</div>
<div class="t" style="left:375px;top:449.5px;font-size:10.4px;color:#505050">Todos los Elementos</div>
<div class="a" style="left:239px;top:462px;width:763px;height:238px;border:1px solid #bcbcbc;border-top:2px solid #bcbcbc;background:#fff"></div>
<div class="a" style="left:240px;top:464px;width:761px;height:17px;background:#f5f5f5"></div>
<div class="a" style="left:252px;top:482px;width:749px;height:26px;background:#ff8000"></div>
<div class="hl" style="left:241px;top:481px;width:760px"></div>
<div class="hl" style="left:241px;top:508px;width:760px"></div>
<div class="hl" style="left:241px;top:535px;width:760px"></div>
<div class="hl" style="left:241px;top:562px;width:760px"></div>
<div class="hl" style="left:241px;top:589px;width:760px"></div>
<div class="vl" style="left:251px;top:464px;height:125px"></div>
<div class="vl" style="left:283px;top:464px;height:125px"></div>
<div class="vl" style="left:377px;top:464px;height:125px"></div>
<div class="vl" style="left:397px;top:464px;height:125px"></div>
<div class="vl" style="left:417px;top:464px;height:125px"></div>
<div class="vl" style="left:442px;top:464px;height:125px"></div>
<div class="vl" style="left:467px;top:464px;height:125px"></div>
<div class="vl" style="left:538px;top:464px;height:125px"></div>
<div class="vl" style="left:634px;top:464px;height:125px"></div>
<div class="vl" style="left:821px;top:464px;height:125px"></div>
<div class="vl" style="left:941px;top:464px;height:125px"></div>
<div class="vl" style="left:240px;top:464px;height:125px;background:#bcbcbc"></div>
<svg style="left:242px;top:468.5px" width="8" height="8" viewBox="0 0 8 8"><path d="M4 0.5 V7.5 M0.5 4 H7.5 M1.5 1.5 L6.5 6.5 M6.5 1.5 L1.5 6.5" stroke="#444" stroke-width="0.9"/></svg>
<div class="a" style="left:241px;top:482px;width:10px;height:26px;background:#f5f5f5"></div>
<div class="a" style="left:241px;top:509px;width:10px;height:26px;background:#f5f5f5"></div>
<div class="a" style="left:241px;top:536px;width:10px;height:26px;background:#f5f5f5"></div>
<div class="a" style="left:241px;top:563px;width:10px;height:26px;background:#f5f5f5"></div>
<svg style="left:244px;top:492.5px" width="5" height="7" viewBox="0 0 5 7"><path d="M0 0 L4 3.5 L0 7Z" fill="#555"/></svg>
<div class="t" style="left:283px;width:94px;top:468px;font-size:11px;color:#333;letter-spacing:-0.2px;text-align:center">No. Económico</div>
<div class="t" style="left:467px;width:71px;top:468px;font-size:11px;color:#333;letter-spacing:-0.2px;text-align:center">Finalizado</div>
<div class="t" style="left:538px;width:96px;top:468px;font-size:11px;color:#333;letter-spacing:-0.2px;text-align:center">Fecha Localizado</div>
<div class="t" style="left:634px;width:187px;top:468px;font-size:11px;color:#333;letter-spacing:-0.2px;text-align:center">Localización</div>
<div class="t" style="left:821px;width:120px;top:468px;font-size:11px;color:#333;letter-spacing:-0.2px;text-align:center">Condición Elemento</div>
<div class="t" style="left:941px;width:83px;top:468px;font-size:11px;color:#333;letter-spacing:-0.2px;text-align:center">Longitud</div>
<div class="t" style="left:380px;top:468px;font-size:11px;color:#222;letter-spacing:-0.2px">E...</div>
<div class="t" style="left:400px;top:468px;font-size:11px;color:#222;letter-spacing:-0.2px">A...</div>
<div class="a" style="left:1001px;top:463px;width:23px;height:30px;background:#fff"></div>
<div class="a" style="left:1001px;top:463px;width:1px;height:237px;background:#bcbcbc"></div>
<div class="t" style="left:286px;top:490px;font-size:11px;color:#fff;letter-spacing:0.1px">ARE0019</div>
<div class="t" style="left:381px;top:490px;font-size:11px;color:#fff;letter-spacing:0.1px">(...</div>
<div class="t" style="left:400px;top:490px;font-size:11px;color:#fff;letter-spacing:0.1px">J...</div>
<div class="t" style="left:286px;top:517px;font-size:11px;color:#333;letter-spacing:0.1px">ARE0031</div>
<div class="t" style="left:381px;top:517px;font-size:11px;color:#333;letter-spacing:0.1px">(...</div>
<div class="t" style="left:286px;top:544px;font-size:11px;color:#333;letter-spacing:0.1px">AEB0000011</div>
<div class="t" style="left:381px;top:544px;font-size:11px;color:#333;letter-spacing:0.1px">A...</div>
<div class="t" style="left:286px;top:571px;font-size:11px;color:#333;letter-spacing:0.1px">EQAA099</div>
<div class="t" style="left:381px;top:571px;font-size:11px;color:#333;letter-spacing:0.1px">A...</div>
<svg style="left:258px;top:482px" width="18" height="24" viewBox="0 0 18 24"><path d="M9 1.5 H12 V4 L15.5 6 V21.5 Q15.5 23 14 23 H4 Q2.5 23 2.5 21.5 V9 Z" fill="#3a90e0" stroke="#1a3a78" stroke-width="1"/><rect x="9.5" y="0" width="3" height="2.5" fill="#222"/><rect x="5" y="10" width="8.5" height="10" fill="#bdbdbd"/><path d="M5 10 H13.5 L5 20Z" fill="#dcdcdc"/><rect x="5" y="18" width="8.5" height="2" fill="#e81818"/></svg>
<svg style="left:255px;top:513px" width="25" height="17" viewBox="0 0 25 17"><rect x="0.5" y="1" width="2.5" height="15" fill="#7a3a2a"/><rect x="22" y="6" width="2.5" height="10" fill="#7a3a2a"/><rect x="3" y="6" width="19" height="2" fill="#e8e8f0"/><rect x="3" y="6" width="5" height="3" fill="#fff" stroke="#bbb" stroke-width="0.5"/><path d="M8 5 Q12 5 13 8 H22 V12 H3 V9 H8Z" fill="#f0a828"/><rect x="3" y="12" width="19" height="2" fill="#f4f4f4" stroke="#ccc" stroke-width="0.4"/></svg>
<svg style="left:254px;top:539px" width="25" height="20" viewBox="0 0 25 20"><rect x="8" y="1" width="11" height="5" rx="1" fill="#555"/><rect x="9.5" y="2.5" width="8" height="2" fill="#999"/><rect x="1" y="9" width="3" height="4" fill="#555"/><rect x="4" y="5.5" width="20" height="12" rx="5" fill="#e8b818" stroke="#8a6a08" stroke-width="0.8"/><path d="M8 8.5 H21 M8 11.5 H21 M8 14.5 H21" stroke="#a88010" stroke-width="1"/><rect x="6" y="17.5" width="16" height="2" fill="#222"/></svg>
<svg style="left:256px;top:564px" width="23" height="23" viewBox="0 0 23 23"><rect x="0" y="1.5" width="23" height="21.5" rx="1" fill="#0a0a0a"/><rect x="3" y="0" width="17" height="2" fill="#0a0a0a"/><circle cx="11.5" cy="12.5" r="7.5" fill="none" stroke="#fff" stroke-width="3" stroke-dasharray="1.8 0.8"/><circle cx="11.5" cy="12.5" r="3.2" fill="none" stroke="#ddd" stroke-width="0.8"/></svg>
<div class="a" style="left:241px;top:651px;width:760px;height:32px;background:#f5f5f5;border-top:1px solid #c8c8c8;border-bottom:2px solid #c8c8c8"></div>
<div class="a" style="left:380px;top:654px;width:16px;height:25px;background:#fff;border:1px solid #c8c8c8"></div>
<svg style="left:386px;top:662px" width="6" height="8" viewBox="0 0 6 8"><path d="M3.7 1 V3 M2.8 3.2 V4.6 M1.7 4.5 V6 M0.8 6.2 H4.2" stroke="#111" stroke-width="1.1"/></svg>
<svg style="left:246px;top:688px" width="4" height="7" viewBox="0 0 4 7"><path d="M3.5 0 L0.5 3 L3.5 6Z" fill="#999"/></svg>
<div class="a" style="left:257px;top:688px;width:586px;height:7px;background:#b8b8b8"></div>
<svg style="left:991px;top:688px" width="4" height="7" viewBox="0 0 4 7"><path d="M0.5 0 L3.5 3 L0.5 6Z" fill="#999"/></svg>
<div class="a" style="left:117px;top:731px;width:1px;height:19px;background:#b0b0b0"></div>
<div class="a" style="left:472px;top:731px;width:1px;height:19px;background:#b0b0b0"></div>
<div class="a" style="left:757px;top:731px;width:1px;height:19px;background:#b0b0b0"></div>
<div class="a" style="left:842px;top:731px;width:1px;height:19px;background:#b0b0b0"></div>
<div class="a" style="left:897px;top:731px;width:1px;height:19px;background:#b0b0b0"></div>
<div class="a" style="left:952px;top:731px;width:1px;height:19px;background:#b0b0b0"></div>
<div class="t" style="left:123px;top:736px;font-size:10.8px;color:#222">Empresa: Aditamentos metalicos del centro S.A. de C.V.</div>
<div class="t" style="left:476px;top:736px;font-size:10.5px;color:#222">Administrador: MIGUEL()</div>
<div class="t" style="left:761px;top:736px;font-size:10.5px;color:#222">Access 2000</div>
<div class="t" style="left:957px;top:735.5px;font-size:10.9px;color:#a0a0a0;transform:scaleX(0.86);transform-origin:0 0">CAPS</div>
<svg style="left:994px;top:737px" width="14" height="14" viewBox="0 0 14 14"><path d="M10.0 3.5 H13.0 M11.5 2.0 V5.0" stroke="#6a6a6a" stroke-width="1"/><path d="M5.899999999999977 7.5 H8.899999999999977 M7.399999999999977 6.0 V9.0" stroke="#6a6a6a" stroke-width="1"/><path d="M10.0 7.5 H13.0 M11.5 6.0 V9.0" stroke="#6a6a6a" stroke-width="1"/><path d="M1.7999999999999545 11.600000000000023 H4.7999999999999545 M3.2999999999999545 10.100000000000023 V13.100000000000023" stroke="#6a6a6a" stroke-width="1"/><path d="M5.899999999999977 11.600000000000023 H8.899999999999977 M7.399999999999977 10.100000000000023 V13.100000000000023" stroke="#6a6a6a" stroke-width="1"/><path d="M10.0 11.600000000000023 H13.0 M11.5 10.100000000000023 V13.100000000000023" stroke="#6a6a6a" stroke-width="1"/></svg>
</body></html>
